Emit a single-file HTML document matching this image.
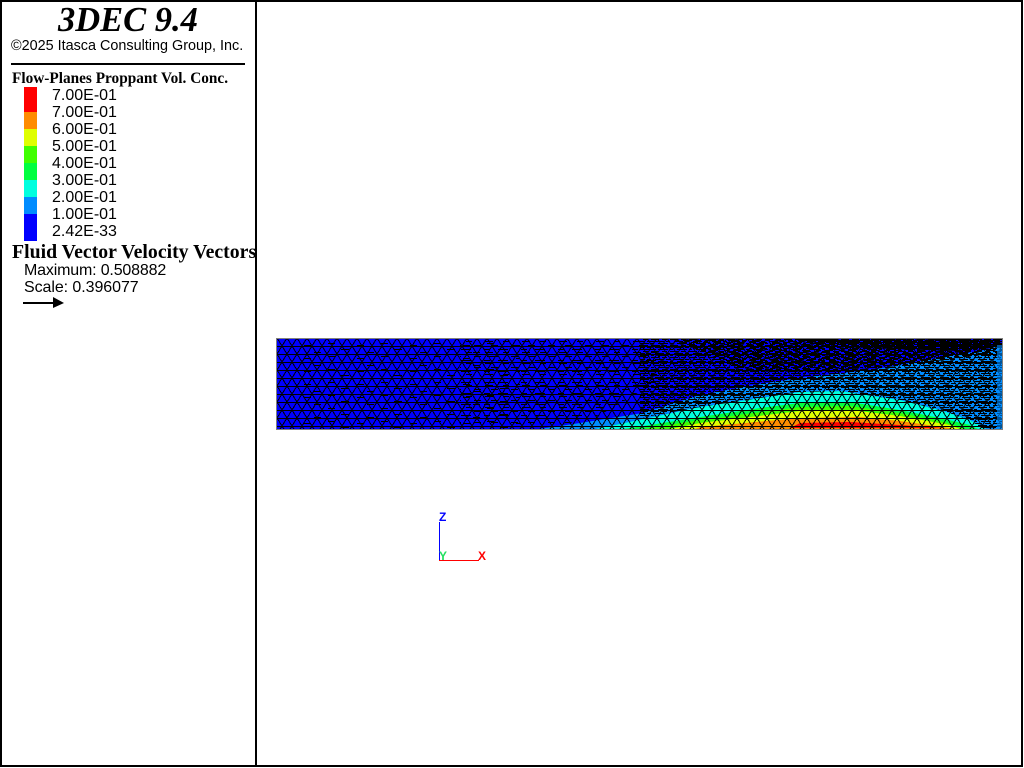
<!DOCTYPE html>
<html>
<head>
<meta charset="utf-8">
<style>
html,body{margin:0;padding:0;background:#fff;width:1024px;height:768px;overflow:hidden}
.b{position:absolute;background:#000}
.t{position:absolute;white-space:nowrap;color:#000;line-height:1}
.s{font-family:"Liberation Sans",sans-serif;font-size:16px}
.h{font-family:"Liberation Serif",serif;font-weight:bold}
.c{position:absolute;left:24px;width:13px}
svg{position:absolute;left:0;top:0}
</style>
</head>
<body>
<div class="b" style="left:0;top:0;width:1023px;height:2px"></div>
<div class="b" style="left:0;top:0;width:2px;height:767px"></div>
<div class="b" style="left:1021px;top:0;width:2px;height:767px"></div>
<div class="b" style="left:0;top:765px;width:1023px;height:2px"></div>
<div class="b" style="left:255px;top:0;width:2px;height:767px"></div>
<div class="b" style="left:11px;top:63px;width:234px;height:2px"></div>

<div class="t" style="left:58px;top:1px;font:italic bold 34.5px 'Liberation Serif',serif;line-height:38px">3DEC 9.4</div>
<div class="t" style="left:11px;top:39px;font-family:'Liberation Sans',sans-serif;font-size:14.4px">©2025 Itasca Consulting Group, Inc.</div>
<div class="t h" style="left:12px;top:71px;font-size:15.3px">Flow-Planes Proppant Vol. Conc.</div>

<div class="c" style="top:87px;height:25px;background:#ff0000"></div>
<div class="c" style="top:112px;height:17px;background:#ff8c00"></div>
<div class="c" style="top:129px;height:17px;background:#dfff00"></div>
<div class="c" style="top:146px;height:17px;background:#40ff00"></div>
<div class="c" style="top:163px;height:17px;background:#00ff40"></div>
<div class="c" style="top:180px;height:17px;background:#00ffdf"></div>
<div class="c" style="top:197px;height:17px;background:#008cff"></div>
<div class="c" style="top:214px;height:27px;background:#0000ff"></div>

<div class="t s" style="left:52px;top:88px">7.00E-01</div>
<div class="t s" style="left:52px;top:105px">7.00E-01</div>
<div class="t s" style="left:52px;top:122px">6.00E-01</div>
<div class="t s" style="left:52px;top:139px">5.00E-01</div>
<div class="t s" style="left:52px;top:156px">4.00E-01</div>
<div class="t s" style="left:52px;top:173px">3.00E-01</div>
<div class="t s" style="left:52px;top:190px">2.00E-01</div>
<div class="t s" style="left:52px;top:207px">1.00E-01</div>
<div class="t s" style="left:52px;top:224px">2.42E-33</div>

<div class="t h" style="left:12px;top:243px;font-size:19.8px">Fluid Vector Velocity Vectors</div>
<div class="t s" style="left:24px;top:263px;letter-spacing:-.17px">Maximum: 0.508882</div>
<div class="t s" style="left:24px;top:280px;letter-spacing:-.07px">Scale: 0.396077</div>

<svg width="1024" height="768" viewBox="0 0 1024 768">
<defs>
<pattern id="mesh" width="10" height="16" patternUnits="userSpaceOnUse" x="277" y="338">
<path d="M0 .5H10M0 8.5H10M0 0L5 8L10 0M0 16L5 8L10 16" fill="none" stroke="#000" stroke-width="1" shape-rendering="crispEdges"/>
</pattern>
<pattern id="d0" width="53" height="13" patternUnits="userSpaceOnUse" x="9" y="342">
<path d="M1 1.5H8M30 3.5H37M14 7.5H22M40 10.5H47" stroke="#000" stroke-width="1" shape-rendering="crispEdges"/>
</pattern>
<pattern id="d1" width="37" height="11" patternUnits="userSpaceOnUse" x="3" y="340">
<path d="M1 1.5H9M19 1.5H25M7 5.5H14M27 5.5H34M0 9.5H6M14 9.5H24" stroke="#000" stroke-width="1" shape-rendering="crispEdges"/>
</pattern>
<pattern id="d2" width="19" height="6" patternUnits="userSpaceOnUse" x="5" y="339">
<path d="M0 .5H8M11 .5H16M4 2.5H13M15 2.5H19M0 4.5H3M7 4.5H17" stroke="#000" stroke-width="1" shape-rendering="crispEdges"/>
</pattern>
<pattern id="d2b" width="23" height="6" patternUnits="userSpaceOnUse" x="11" y="342">
<path d="M2 .5H9M13 .5H20M0 2.5H5M9 2.5H17M5 4.5H14M18 4.5H23" stroke="#000" stroke-width="1" shape-rendering="crispEdges"/>
</pattern>
<pattern id="d3" width="11" height="2" patternUnits="userSpaceOnUse" x="1" y="338">
<path d="M0 .5H9M4 1.5H11" stroke="#000" stroke-width="1" shape-rendering="crispEdges"/>
</pattern>
<clipPath id="dom"><rect x="277" y="338" width="726" height="92"/></clipPath>
</defs>
<g clip-path="url(#dom)">
<rect x="277" y="338" width="726" height="92" fill="#0000ff"/>
<path fill="#008cff" d="M525 431L580 423L643 413L700 395L760 384L800 378L877 369L927 360L985 350L1003 344V431Z"/>
<path fill="#00ffdf" d="M585 431L620 424L700 407L760 398L800 392L840 391L900 400L940 410L970 420L990 431Z"/>
<path fill="#00ff40" d="M610 431L650 425L700 417L760 408L800 403L850 402L900 410L940 418L970 425L982 431Z"/>
<path fill="#40ff00" d="M630 431L700 420L800 407L850 406L900 413L945 422L972 431Z"/>
<path fill="#dfff00" d="M660 431L700 423L800 411L850 410L900 416L950 425L965 431Z"/>
<path fill="#ff8c00" d="M690 431L700 427L800 418L860 417L900 421L950 428L958 431Z"/>
<path fill="#ff0000" d="M790 428L800 423L850 422L900 425L945 428Z"/>
<rect x="277" y="338" width="726" height="92" fill="url(#mesh)"/>
<path fill="url(#d0)" d="M300 340H520V431H300Z"/>
<path fill="url(#d1)" d="M460 338H660V380L600 415L540 431H460Z"/>
<path fill="url(#d2)" d="M640 338H1003V431H985L970 420L940 410L900 400L840 391L800 392L760 398L700 407L640 418Z"/>
<path fill="url(#d2b)" d="M670 338H1003V352L900 366L800 372L740 368Z"/>
<path fill="url(#d3)" d="M800 338H1003V347L960 351L860 348L800 342Z"/>
<rect x="997" y="345" width="6" height="86" fill="#008cff" opacity=".6"/>
</g>
<rect x="276.5" y="338.5" width="726" height="91" fill="none" stroke="#808080" stroke-width="1" shape-rendering="crispEdges"/>
<path d="M23 303H54" stroke="#000" stroke-width="2" shape-rendering="crispEdges"/>
<path d="M53 297L64 303L53 308Z" fill="#000"/>
<path d="M439.5 522V560" stroke="#0000ff" stroke-width="1" shape-rendering="crispEdges"/>
<path d="M439 560.5H479" stroke="#ff0000" stroke-width="1" shape-rendering="crispEdges"/>
</svg>
<div class="t" style="left:439px;top:510px;font:bold 12px 'Liberation Sans',sans-serif;color:#0000ff">Z</div>
<div class="t" style="left:439px;top:549px;font:bold 12px 'Liberation Sans',sans-serif;color:#22e060">Y</div>
<div class="t" style="left:478px;top:549px;font:bold 12px 'Liberation Sans',sans-serif;color:#ff0000">X</div>
</body>
</html>
